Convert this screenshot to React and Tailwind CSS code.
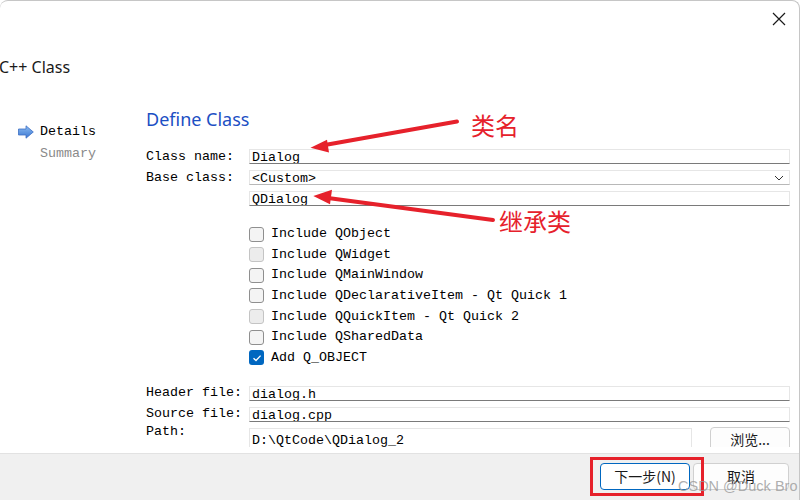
import React from "react";

const mono = "font-['Liberation_Mono','Noto_Sans_CJK_SC',monospace] text-[13.33px]";

const Field = ({ text, dark = true, children }) => (
  <div
    className={`relative flex-1 h-[15px] overflow-hidden bg-white border border-[#e6e6e6] ${dark ? "border-b-[#7a7a7a]" : "border-b-[#b8b8b8] bg-[#fdfdfd]"} pl-[2px] leading-[15px] text-black`}
  >
    {text}
    {children}
  </div>
);

const Row = ({ label, children }) => (
  <div className="flex items-center h-[21px]">
    <div className="w-[103px] shrink-0">{label}</div>
    {children}
  </div>
);

const CheckBox = ({ label, checked, disabled }) => (
  <div className="flex items-center h-[20.67px]">
    {checked ? (
      <div className="w-[15px] h-[15px] rounded-[3px] bg-[#0067c0] flex items-center justify-center">
        <svg width="10" height="8" viewBox="0 0 10 8">
          <path d="M1.5 4.2 L4 6.5 L8.6 1.6" fill="none" stroke="white" strokeWidth="1.3" />
        </svg>
      </div>
    ) : (
      <div
        className={`w-[15px] h-[15px] rounded-[3px] border ${disabled ? "border-[#c4c4c4] bg-[#ececec]" : "border-[#8f8f8f] bg-[#f4f4f4]"}`}
      />
    )}
    <span className="ml-[7px] text-black">{label}</span>
  </div>
);

export default function App() {
  return (
    <div className="relative w-[800px] h-[500px] overflow-hidden bg-white border-t border-r border-[#c6c6c6] rounded-t-lg flex flex-col font-['Noto_Sans',sans-serif]">
      <div className="flex justify-end pt-[11px] pr-[13px]">
        <svg width="14" height="14" viewBox="0 0 14 14">
          <path d="M1 1 L13 13 M13 1 L1 13" stroke="#1a1a1a" strokeWidth="1.2" />
        </svg>
      </div>
      <div className="pt-[31px] text-[16px] leading-[20px] text-[#1a1a1a] -ml-px">C++ Class</div>

      <div className="flex flex-1 mt-[28px] min-h-0">
        <div className={`w-[146px] shrink-0 pl-[18px] pt-[16px] ${mono}`}>
          <div className="flex items-center h-[22px]">
            <svg width="16" height="14" viewBox="0 0 16 14">
              <defs>
                <linearGradient id="ag" x1="0" y1="0" x2="0" y2="1">
                  <stop offset="0" stopColor="#8cbcf2" />
                  <stop offset="1" stopColor="#3a77d2" />
                </linearGradient>
              </defs>
              <path d="M0.5 4 H8 V0.8 L15.3 7 L8 13.2 V10 H0.5 Z" fill="url(#ag)" stroke="#3c6fc4" strokeWidth="0.8" />
            </svg>
            <span className="ml-[6px] text-black">Details</span>
          </div>
          <div className="h-[22px] leading-[22px] pl-[22px] text-[#8a8a8a]">Summary</div>
        </div>

        <div className="flex-1 flex flex-col pr-[9px] min-h-0">
          <div className="pt-[2px] text-[18px] leading-[24px] text-[#1c4fc4]">Define Class</div>
          <div className={`mt-[15px] ${mono}`}>
            <Row label="Class name:">
              <Field text="Dialog" />
            </Row>
            <Row label="Base class:">
              <Field text="<Custom>" dark={false}>
                <svg className="absolute right-[5px] top-[4px]" width="10" height="6" viewBox="0 0 10 6">
                  <path d="M1 1 L5 5 L9 1" fill="none" stroke="#333" strokeWidth="1" />
                </svg>
              </Field>
            </Row>
            <Row label="">
              <Field text="QDialog" />
            </Row>

            <div className="mt-[14.7px] pl-[103px]">
              <CheckBox label="Include QObject" />
              <CheckBox label="Include QWidget" disabled />
              <CheckBox label="Include QMainWindow" />
              <CheckBox label="Include QDeclarativeItem - Qt Quick 1" />
              <CheckBox label="Include QQuickItem - Qt Quick 2" disabled />
              <CheckBox label="Include QSharedData" />
              <CheckBox label="Add Q_OBJECT" checked />
            </div>

            <div className="mt-[14.7px]">
              <Row label="Header file:">
                <Field text="dialog.h" />
              </Row>
              <Row label="Source file:">
                <Field text="dialog.cpp" />
              </Row>
              <div className="flex mt-[2px]">
                <div className="w-[103px] shrink-0 leading-[16px] -mt-[3px]">Path:</div>
                <div className="flex-1 flex h-[20px] overflow-hidden">
                  <div className="flex-1 h-[26px] mt-px border border-[#e6e6e6] pl-[2px] pt-[4px] leading-[15px] text-black">
                    D:\QtCode\QDialog_2
                  </div>
                  <div className="w-[80px] h-[26px] ml-[18px] shrink-0 rounded-[4px] border border-[#d0d0d0] bg-[#fdfdfd] flex justify-center pt-[1px] font-['Noto_Sans_CJK_SC',sans-serif] text-[14px] leading-[20px] text-[#1a1a1a]">
                    浏览...
                  </div>
                </div>
              </div>
            </div>
          </div>
        </div>
      </div>

      <div className="h-[47px] shrink-0 mt-[6px] bg-[#f0f0f0] border-t border-[#e2e2e2] flex justify-end items-start pt-[9px] pr-[10px] gap-[3px]">
        <div className="w-[90px] h-[27px] rounded-[4px] border border-[#0067c0] bg-white flex items-center justify-center font-['Noto_Sans_CJK_SC',sans-serif] text-[14px] text-[#1a1a1a]">
          下一步(N)
        </div>
        <div className="w-[96px] h-[27px] rounded-[4px] border border-[#d0d0d0] bg-[#fdfdfd] flex items-center justify-center font-['Noto_Sans_CJK_SC',sans-serif] text-[14px] text-[#1a1a1a]">
          取消
        </div>
      </div>

      {/* annotations */}
      <svg className="absolute left-0 top-0 pointer-events-none" width="800" height="500" viewBox="0 0 800 500">
        <line x1="457" y1="120.5" x2="322" y2="144.5" stroke="#e6212b" strokeWidth="4" strokeLinecap="round" />
        <polygon points="310.5,146.7 327,138.8 329,151.5" fill="#e6212b" />
        <line x1="493" y1="219" x2="328" y2="197" stroke="#e6212b" strokeWidth="4" strokeLinecap="round" />
        <polygon points="313.3,195 332,188.8 330,203.3" fill="#e6212b" />
      </svg>
      <div className="absolute left-[471px] top-[110px] text-[24px] leading-[28px] text-[#e6212b] font-['Noto_Sans_CJK_SC',sans-serif]">
        类名
      </div>
      <div className="absolute left-[499px] top-[206px] text-[24px] leading-[28px] text-[#e6212b] font-['Noto_Sans_CJK_SC',sans-serif]">
        继承类
      </div>
      <div className="absolute left-[590px] top-[456px] w-[114px] h-[39px] border-[3px] border-[#e6212b]" />
      <div className="absolute left-[678px] top-[476px] text-[14.5px] leading-[18px] text-[#9a9a9a]/80 font-['Liberation_Sans',sans-serif]">
        CSDN @Duck Bro
      </div>
    </div>
  );
}
